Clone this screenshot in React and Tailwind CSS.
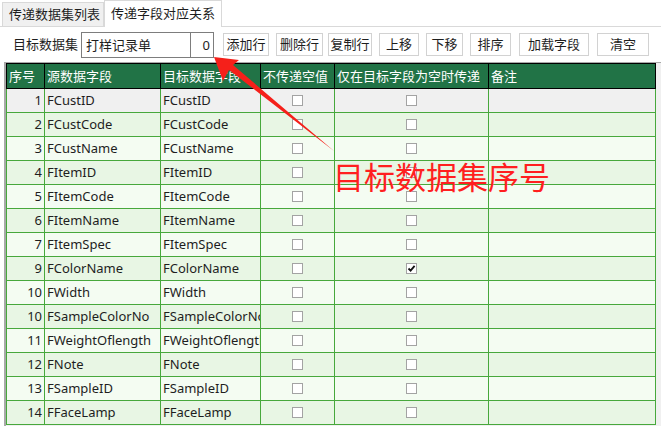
import React from 'react';

const rows = [
  ['1', 'FCustID', 'FCustID', false],
  ['2', 'FCustCode', 'FCustCode', false],
  ['3', 'FCustName', 'FCustName', false],
  ['4', 'FItemID', 'FItemID', false],
  ['5', 'FItemCode', 'FItemCode', false],
  ['6', 'FItemName', 'FItemName', false],
  ['7', 'FItemSpec', 'FItemSpec', false],
  ['9', 'FColorName', 'FColorName', true],
  ['10', 'FWidth', 'FWidth', false],
  ['10', 'FSampleColorNo', 'FSampleColorNo', false],
  ['11', 'FWeightOflength', 'FWeightOflength', false],
  ['12', 'FNote', 'FNote', false],
  ['13', 'FSampleID', 'FSampleID', false],
  ['14', 'FFaceLamp', 'FFaceLamp', false],
];

const buttons = [
  ['添加行', 'w-[46px] ml-[9px]'],
  ['删除行', 'w-[47px] ml-[7px]'],
  ['复制行', 'w-[44px] ml-[5px]'],
  ['上移', 'w-[40px] ml-[7px]'],
  ['下移', 'w-[37px] ml-[7px]'],
  ['排序', 'w-[41px] ml-[7px]'],
  ['加载字段', 'w-[70px] ml-[8px]'],
  ['清空', 'w-[52px] ml-[8px]'],
];

function Box({ checked }) {
  return (
    <span className="w-[11px] h-[11px] border border-[#a3a3a3] bg-white flex items-center justify-center">
      {checked && (
        <svg width="9" height="9" viewBox="0 0 9 9">
          <path d="M1.5 4.5 L3.6 6.6 L7.6 1.8" fill="none" stroke="#111" strokeWidth="1.8" />
        </svg>
      )}
    </span>
  );
}

export default function App() {
  return (
    <div
      className="relative w-[661px] h-[426px] bg-white overflow-hidden text-[13px] text-[#1e1e1e]"
      style={{ fontFamily: '"Noto Sans", "Noto Sans CJK SC", sans-serif' }}
    >
      {/* tabs */}
      <div className="flex items-end h-[27px] border-b border-[#d9d9d9]">
        <div className="h-[24px] ml-[2px] w-[102px] bg-[#f0f0f0] border border-b-0 border-[#d9d9d9] pl-[6px] leading-[22px]">
          传递数据集列表
        </div>
        <div className="h-[27px] -mb-px w-[118px] bg-white border border-b-0 border-[#d9d9d9] pl-[6px] leading-[24px]">
          传递字段对应关系
        </div>
      </div>

      {/* toolbar */}
      <div className="flex items-center h-[35px]">
        <span className="ml-[13px] w-[68px]">目标数据集</span>
        <div className="h-[26px] w-[110px] border border-[#7d7d7d] pl-[4px] leading-[24px]">打样记录单</div>
        <div className="h-[26px] w-[23px] border border-l-0 border-[#7d7d7d] pr-[3px] text-right leading-[24px]">0</div>
        {buttons.map(([t, cls]) => (
          <button
            key={t}
            className={`h-[23px] border border-[#d2d2d2] bg-white text-center leading-[21px] ${cls}`}
          >
            {t}
          </button>
        ))}
      </div>

      {/* grid */}
      <div className="ml-[4px] border-l-2 border-t border-[#a9a9a9] bg-[#f0f0f0] h-[364px]">
        <div className="w-[650px]">
          <div className="flex h-[26px] bg-[#217346] text-white border border-black leading-[24px]">
            <div className="w-[38px] border-r border-black pl-[2px] shrink-0">序号</div>
            <div className="w-[116px] border-r border-black pl-[2px] shrink-0">源数据字段</div>
            <div className="w-[100px] border-r border-black pl-[2px] shrink-0">目标数据字段</div>
            <div className="w-[74px] border-r border-black pl-[2px] shrink-0">不传递空值</div>
            <div className="w-[154px] border-r border-black pl-[2px] shrink-0">仅在目标字段为空时传递</div>
            <div className="flex-1 pl-[2px]">备注</div>
          </div>
          {rows.map(([n, src, dst, chk], i) => (
            <div
              key={i}
              className={`flex h-[24px] border-l border-b border-[#47a83c] leading-[23px] ${
                i === 0 ? 'bg-[#f0f0f0]' : i % 2 === 1 ? 'bg-[#e8f6e4]' : 'bg-[#f4fcf2]'
              }`}
            >
              <div className="w-[38px] border-r border-[#47a83c] pr-[2px] text-right shrink-0">{n}</div>
              <div className="w-[116px] border-r border-[#47a83c] pl-[2px] shrink-0 overflow-hidden whitespace-nowrap">{src}</div>
              <div className="w-[100px] border-r border-[#47a83c] pl-[2px] shrink-0 overflow-hidden whitespace-nowrap">{dst}</div>
              <div className="w-[74px] border-r border-[#47a83c] shrink-0 flex items-center justify-center">
                <Box checked={false} />
              </div>
              <div className="w-[154px] border-r border-[#47a83c] shrink-0 flex items-center justify-center">
                <Box checked={chk} />
              </div>
              <div className="flex-1 border-r border-[#47a83c]" />
            </div>
          ))}
        </div>
      </div>

      {/* annotation */}
      <svg className="absolute left-0 top-0 pointer-events-none" width="661" height="426">
        <polygon
          points="214,57 239,60 233,65 334,151 229,70 223,81"
          fill="#f5201a"
        />
      </svg>
      <div
        className="absolute left-[333px] top-[160px] text-[31px] leading-none text-[#ff1f1f] whitespace-nowrap"
        style={{ fontFamily: '"Noto Sans CJK SC", sans-serif' }}
      >
        目标数据集序号
      </div>
    </div>
  );
}
